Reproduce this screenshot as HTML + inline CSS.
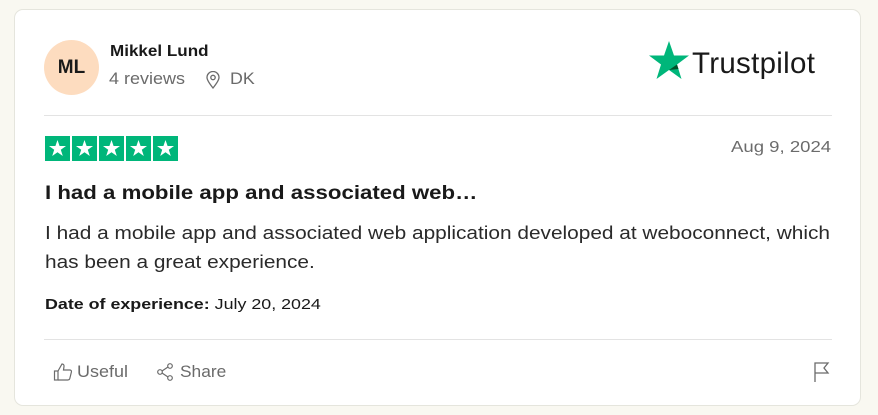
<!DOCTYPE html>
<html><head><style>
body{margin:0;width:878px;height:415px;background:#f9f8f1;font-family:"Liberation Sans",sans-serif;position:relative;overflow:hidden}
.card{position:absolute;left:14px;top:9px;width:847px;height:397px;background:#fff;border:1px solid #e5e5dd;border-radius:9px;box-sizing:border-box}
.a{position:absolute;white-space:nowrap;transform-origin:0 0}
.av{left:44px;top:40px;width:55px;height:55px;border-radius:50%;background:#fddcbf;color:#1a1a1a;font-weight:bold;font-size:19px;text-align:center;line-height:55px}
.hr{height:1px;background:#e3e3e3;left:44px;width:788px}
.gray{color:#6b6b6b}
</style></head><body>
<div class="card"></div>
<div class="a av">ML</div>
<div class="a" style="left:110px;top:43px;font-weight:bold;font-size:15.5px;color:#191919;transform:scaleX(1.1)">Mikkel Lund</div>
<div class="a gray" style="left:109px;top:70px;font-size:16.5px;transform:scaleX(1.09)">4 reviews</div>
<svg class="a" style="left:205px;top:71px" width="16" height="18" viewBox="0 0 16 18"><path d="M8 17C4 12 2 9 2 6.5a6 6 0 0 1 12 0C14 9 12 12 8 17Z" fill="none" stroke="#6b6b6b" stroke-width="1.3"/><circle cx="8" cy="6.5" r="2.2" fill="none" stroke="#6b6b6b" stroke-width="1.3"/></svg>
<div class="a gray" style="left:230px;top:70px;font-size:16.5px;transform:scaleX(1.08)">DK</div>
<svg class="a" style="left:648px;top:40px" width="42" height="40" viewBox="0 0 42 40"><polygon points="21,1 26,15.5 41,15.5 29,24.5 33.5,39 21,30 8.5,39 13,24.5 1,15.5 16,15.5" fill="#00b67a"/><polygon points="29,24.5 30.5,29 21,30" fill="#005128"/></svg>
<div class="a" style="left:692px;top:47px;font-size:29.5px;color:#191919;letter-spacing:0.3px">Trustpilot</div>
<div class="a hr" style="top:115px"></div>
<div class="a" style="left:45px;top:136px;height:25px;font-size:0">
<svg width="134" height="25" viewBox="0 0 134 25">
<g fill="#00b67a"><rect x="0" width="25" height="25"/><rect x="27" width="25" height="25"/><rect x="54" width="25" height="25"/><rect x="81" width="25" height="25"/><rect x="108" width="25" height="25"/></g>
<g fill="#fff"><polygon id="s" points="12.5,4 14.6,10 21,10 15.8,13.8 17.8,20 12.5,16.2 7.2,20 9.2,13.8 4,10 10.4,10"/><use href="#s" x="27"/><use href="#s" x="54"/><use href="#s" x="81"/><use href="#s" x="108"/></g></svg></div>
<div class="a gray" style="left:731px;top:139px;font-size:16px;transform:scaleX(1.16)">Aug 9, 2024</div>
<div class="a" style="left:45px;top:182px;font-weight:bold;font-size:19.5px;color:#191919;transform:scaleX(1.14)">I had a mobile app and associated web…</div>
<div class="a" style="left:45px;top:219px;font-size:18px;line-height:29px;color:#2a2a2a;transform:scaleX(1.157)">I had a mobile app and associated web application developed at weboconnect, which<br>has been a great experience.</div>
<div class="a" style="left:45px;top:296px;font-size:15px;color:#191919;transform:scaleX(1.19)"><b>Date of experience:</b> July 20, 2024</div>
<div class="a hr" style="top:339px"></div>
<svg class="a" style="left:53px;top:362px" width="20" height="20" viewBox="0 0 20 20" fill="none" stroke="#6b6b6b" stroke-width="1.2"><rect x="1.5" y="9" width="3.5" height="9"/><path d="M5 9l4-7c1.5 0 2.2 1 2 2.5L10.5 8H17c1 0 1.7 1 1.4 2l-1.6 6.5c-.3 1-1 1.5-2 1.5H5"/></svg>
<div class="a gray" style="left:77px;top:363px;font-size:16.5px;transform:scaleX(1.09)">Useful</div>
<svg class="a" style="left:156px;top:362px" width="20" height="20" viewBox="0 0 20 20" fill="none" stroke="#6b6b6b" stroke-width="1.2"><circle cx="4" cy="10" r="2.3"/><circle cx="14" cy="4" r="2.3"/><circle cx="14" cy="16" r="2.3"/><path d="M6 9l6-4M6 11l6 4"/></svg>
<div class="a gray" style="left:180px;top:363px;font-size:16.5px;transform:scaleX(1.05)">Share</div>
<svg class="a" style="left:812px;top:361px" width="20" height="22" viewBox="0 0 20 22" fill="none" stroke="#6b6b6b" stroke-width="1.3"><path d="M3 21V2h13l-4 5 4 5H3"/></svg>
</body></html>
